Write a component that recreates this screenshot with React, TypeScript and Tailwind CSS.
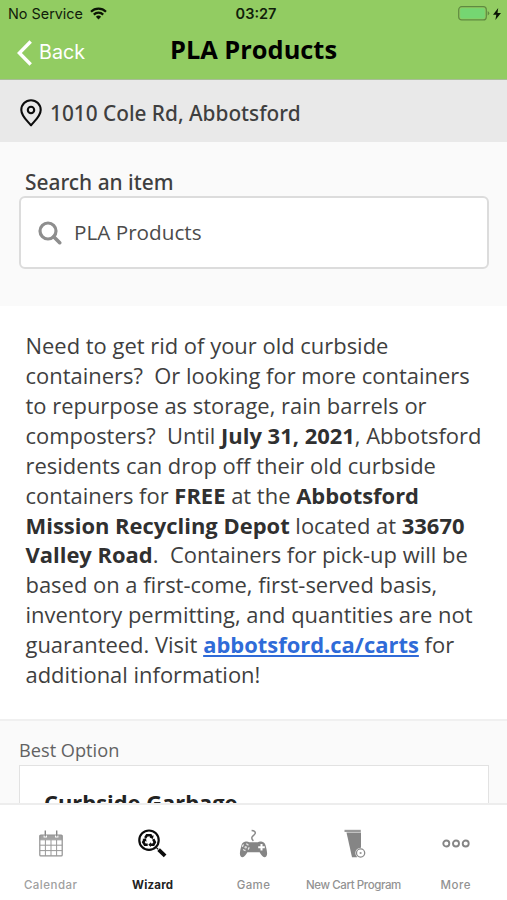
import type { ReactNode } from 'react';

function StatusBar() {
  return (
    <div className="flex h-[27px] items-center px-[8px] font-['Inter',sans-serif] text-[#10200a]">
      <div className="flex flex-1 items-center gap-[7px]">
        <span className="text-[14.4px]">No Service</span>
        <svg width="17" height="13" viewBox="0 0 17 13" fill="none" stroke="#0b1405" strokeWidth="2.2">
          <path d="M1 4.7a10.6 10.6 0 0 1 15 0" />
          <path d="M3.8 7.6a6.7 6.7 0 0 1 9.4 0" />
          <path d="M8.500 12.400 5.900 9.800a3.700 3.700 0 0 1 5.200 0z" fill="#0b1405" stroke="none" />
        </svg>
      </div>
      <span className="pl-[3px] text-[14.5px] font-semibold">03:27</span>
      <div className="mr-[-6px] flex flex-1 items-center justify-end gap-[3px] pr-[4px]">
        <svg width="32" height="15" viewBox="0 0 32 15">
          <rect x="0.7" y="0.7" width="27.6" height="13.2" rx="3" fill="none" stroke="#5f8a41" strokeWidth="1.2" />
          <rect x="2.2" y="2.2" width="24.6" height="10.2" rx="1.6" fill="#75d672" />
          <path d="M29.7 5v4.6q1.6-.8 1.6-2.3T29.7 5z" fill="#5f8a41" />
        </svg>
        <svg width="8" height="12" viewBox="0 0 8 12" fill="#0b1405">
          <path d="M5.2 0 0 6.7h3.3L2.4 12 8 5H4.5z" />
        </svg>
      </div>
    </div>
  );
}

function NavBar() {
  return (
    <div className="flex h-[52px] items-start px-[17px]">
      <div className="flex flex-1 items-center gap-[7px] pt-[12px] text-white">
        <svg width="15" height="26" viewBox="0 0 15 26" fill="none" stroke="currentColor" strokeWidth="3.4">
          <path d="M13.7 1.5 2.4 13l11.3 11.5" />
        </svg>
        <span className="font-['Inter',sans-serif] text-[19.7px] leading-[27px]">Back</span>
      </div>
      <h1 className="pt-[6px] text-[25.4px] leading-[33px] font-bold whitespace-nowrap text-black">PLA Products</h1>
      <div className="flex-1" />
    </div>
  );
}

function CalendarIcon() {
  return (
    <svg width="24" height="27" viewBox="0 0 24 27" fill="none">
      <path d="M.7 5h22.6v4.5H.7z" fill="#a3a3a3" />
      <path d="M6.3.5v7M17.7.5v7" stroke="#fff" strokeWidth="3.4" />
      <path d="M6.3.5v6M17.7.5v6" stroke="#868686" strokeWidth="1.4" />
      <rect x=".8" y="5" width="22.4" height="20.9" rx="1" stroke="#929292" strokeWidth="1.2" />
      <path d="M.8 9.8h22.4M.8 15.2h22.4M.8 20.6h22.4M6.4 9.8v16M12 9.8v16M17.6 9.8v16" stroke="#999" />
    </svg>
  );
}

function WizardIcon() {
  return (
    <svg width="29" height="29" viewBox="0 0 29 29" fill="none" stroke="#0c0c0c">
      <circle cx="11" cy="11.2" r="9.7" strokeWidth="2.2" />
      <path d="m20.6 20.6 6.5 6.2" strokeWidth="3.8" />
      <path d="m18.2 18.4 2 2" strokeWidth="1.2" />
      <g strokeWidth="2.6">
        <path d="M7.2 8.9 8.9 6.2h3.7l1.1 1.8" />
        <path d="m15.2 10.2 1.6 3-1.4 2.5h-3" />
        <path d="M9.7 15.7H6.9l-1.6-2.5 1.3-2.5" />
      </g>
      <g fill="#0c0c0c" stroke="none">
        <path d="m15.7 6.2-.8 3.9-3.4-1.6zM12.9 13.2v4.9l-2.6-2.4zM4.3 10l3.7-.7.5 3.5z" />
      </g>
    </svg>
  );
}

function GameIcon() {
  return (
    <svg width="29" height="29" viewBox="0 0 29 29">
      <path d="M12.600 1.500c2.500.2 4.100 1.300 3.600 2.900-.5 1.800-3.200 2.300-3.400 4.400-.1 1.200.5 2.100 1.600 3" fill="none" stroke="#8a8a8a" strokeWidth="1.500" />
      <path d="M5.800 12.800c2-.5 3.400-.3 4.300.5h8.800c.9-.8 2.300-1 4.300-.5 1.800.5 2.800 1.600 3.400 3.800.7 2.600 1.400 5.500 1.500 7.600.1 2.600-1 4-2.600 4-1.900 0-3.500-2.500-4.900-4.900H8.400C7 25.700 5.400 28.200 3.500 28.200c-1.600 0-2.700-1.400-2.600-4 .1-2.100.8-5 1.500-7.600.6-2.200 1.600-3.300 3.400-3.800z" fill="#858585" />
      <circle cx="6.700" cy="18.200" r="3.300" fill="none" stroke="#e8e8e8" strokeWidth="1.300" strokeDasharray="2.600" />
      <circle cx="6.700" cy="18.200" r="1.200" fill="#d8d8d8" />
      <path d="M22.500 14.900v6.600M19.200 18.200h6.600" stroke="#fff" strokeWidth="2" />
    </svg>
  );
}

function CartIcon() {
  return (
    <svg width="22" height="29" viewBox="0 0 22 29">
      <path d="M.5.8h16.300v2.200H.5z" fill="#999" />
      <path d="M2.500 3.500h14.500V20l-4 8.300H8z" fill="#858585" />
      <circle cx="16.600" cy="24" r="5.200" fill="#fff" />
      <circle cx="16.600" cy="24" r="4.100" fill="#fff" stroke="#8a8a8a" strokeWidth="1.300" />
      <circle cx="16.600" cy="24" r="1.100" fill="#999" />
    </svg>
  );
}

function MoreIcon() {
  return (
    <svg width="28" height="9" viewBox="0 0 28 9" fill="none" stroke="#858585" strokeWidth="1.900">
      <circle cx="4.300" cy="4.500" r="3" />
      <circle cx="14" cy="4.500" r="3" />
      <circle cx="23.700" cy="4.500" r="3" />
    </svg>
  );
}

function Tab({ icon, label, className }: { icon: ReactNode; label: string; className: string }) {
  return (
    <div className="flex flex-1 flex-col items-center">
      <div className="flex h-[73px] items-center pt-[4px]">{icon}</div>
      <span className={'text-[11.5px] leading-[14px] whitespace-nowrap ' + className}>{label}</span>
    </div>
  );
}

export default function App() {
  return (
    <div className="flex h-[900px] w-[507px] flex-col overflow-hidden bg-white font-['Open_Sans',sans-serif] text-[#3f3f3f]">
      <header className="h-[80px] shrink-0 border-b border-[#a8bd98] bg-[#92cc62]">
        <StatusBar />
        <NavBar />
      </header>

      <div className="flex h-[62px] shrink-0 items-center gap-[8px] bg-[#e9e9e9] pt-[3px] pl-[20px]">
        <svg width="22" height="28" viewBox="0 0 22 28" fill="none" stroke="#0c0c0c" strokeWidth="2.100">
          <path d="M11 26.300C7.800 22.300 1.300 17.200 1.300 10.900a9.700 9.700 0 0 1 19.400 0C20.700 17.200 14.200 22.300 11 26.300z" strokeLinejoin="round" />
          <circle cx="11" cy="11" r="3.200" />
        </svg>
        <span className="pt-[2px] font-['Noto_Sans',sans-serif] text-[20.800px] font-medium whitespace-nowrap">1010 Cole Rd, Abbotsford</span>
      </div>

      <section className="h-[164px] shrink-0 bg-[#fafafa] pt-[26px] pr-[18px] pl-[19px]">
        <h2 className="pl-[6px] font-['Noto_Sans',sans-serif] text-[20.900px] leading-[28px] font-medium">Search an item</h2>
        <div className="flex h-[73px] items-center gap-[12px] rounded-[6px] border-2 border-[#dcdcdc] bg-white pl-[17px]">
          <svg width="24" height="24" viewBox="0 0 24 24" fill="none" stroke="#8e8e8e" strokeWidth="3.200">
            <circle cx="10" cy="10" r="8" />
            <path d="m15.700 15.700 6 6" strokeWidth="3.600" strokeLinecap="round" />
          </svg>
          <span className="text-[20.700px] whitespace-nowrap text-[#4b4b4b]">PLA Products</span>
        </div>
      </section>

      <section className="h-[413px] shrink-0 bg-white pt-[25px] pl-[25.500px]">
        <p className="text-[21.950px] leading-[29.920px] whitespace-nowrap [&_b]:text-[#303030]">
          Need to get rid of your old curbside<br />
          containers?&nbsp; Or looking for more containers<br />
          to repurpose as storage, rain barrels or<br />
          composters?&nbsp; Until <b>July 31, 2021</b>, Abbotsford<br />
          residents can drop off their old curbside<br />
          containers for <b>FREE</b> at the <b>Abbotsford</b><br />
          <b>Mission Recycling Depot</b> located at <b>33670</b><br />
          <b>Valley Road</b>.&nbsp; Containers for pick-up will be<br />
          based on a first-come, first-served basis,<br />
          inventory permitting, and quantities are not<br />
          guaranteed. Visit <a className="font-bold text-[#2f6bd8] underline">abbotsford.ca/carts</a> for<br />
          additional information!
        </p>
      </section>

      <section className="h-[84px] shrink-0 overflow-hidden border-t-2 border-[#f0f0f0] bg-[#fafafa] pt-[17px] pr-[18px] pl-[19px]">
        <h3 className="text-[18.200px] leading-[25px] text-[#626262]">Best Option</h3>
        <div className="mt-[2px] h-[80px] border border-[#e2e2e2] bg-white pt-[22px] pl-[24px]">
          <span className="text-[21.900px] leading-[30px] font-bold whitespace-nowrap text-[#222]">Curbside Garbage</span>
        </div>
      </section>

      <nav className="flex h-[97px] shrink-0 border-t-2 border-[#ededed] bg-white font-['Inter',sans-serif]">
        <Tab icon={<CalendarIcon />} label="Calendar" className="font-medium tracking-[0.500px] text-[#a0a0a0]" />
        <Tab icon={<WizardIcon />} label="Wizard" className="pl-px font-bold tracking-[0.200px] text-[#222]" />
        <Tab icon={<GameIcon />} label="Game" className="font-medium tracking-[0.400px] text-[#929292]" />
        <Tab icon={<CartIcon />} label="New Cart Program" className="pr-[3px] font-medium tracking-[-0.400px] text-[#929292]" />
        <Tab icon={<MoreIcon />} label="More" className="pr-px font-medium tracking-[0.500px] text-[#929292]" />
      </nav>
    </div>
  );
}
